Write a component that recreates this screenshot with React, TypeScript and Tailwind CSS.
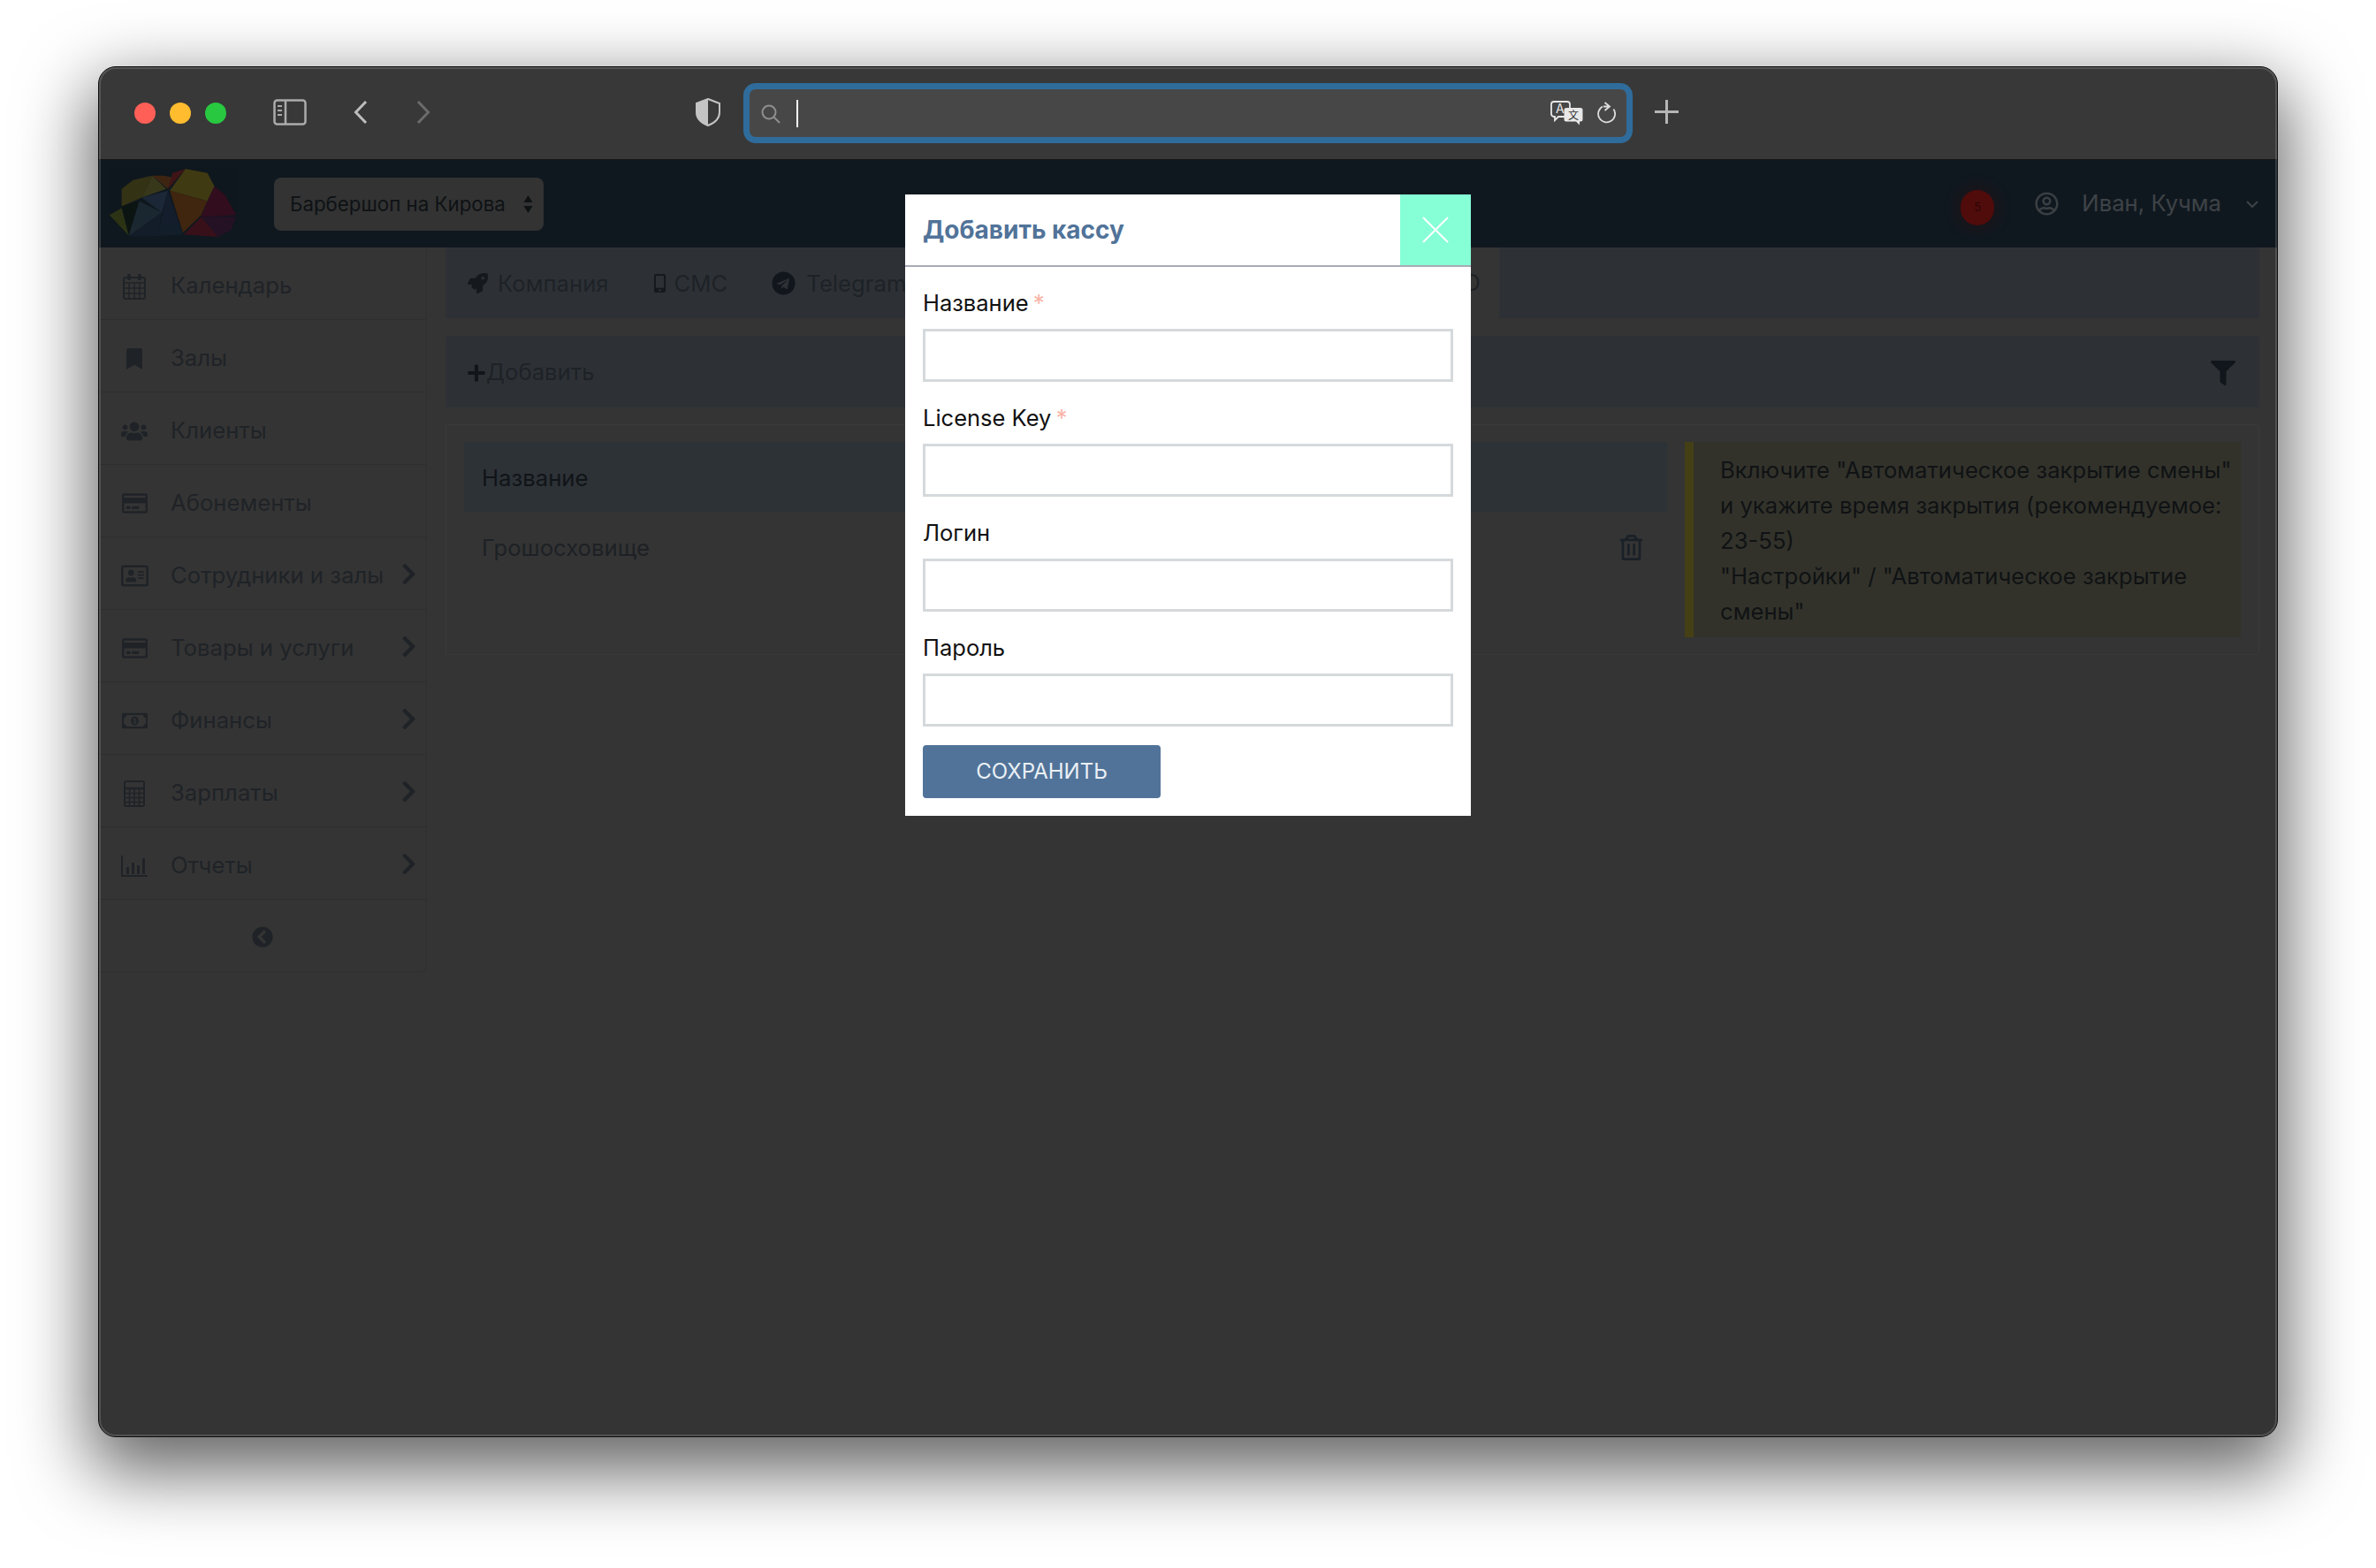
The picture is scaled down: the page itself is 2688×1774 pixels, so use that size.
import React from 'react';
import {
  FaBookmark,
  FaChevronCircleLeft,
  FaChevronRight,
  FaFilter,
  FaMobileAlt,
  FaPlus,
  FaRegAddressCard,
  FaRegCreditCard,
  FaRegMoneyBillAlt,
  FaRegTrashAlt,
  FaRegUserCircle,
  FaRocket,
  FaTelegram,
  FaUsers,
} from 'react-icons/fa';

const CalendarIcon = () => (
  <svg width="26" height="30" viewBox="0 0 26 30" fill="none" stroke="currentColor" strokeWidth="2">
    <rect x="1" y="5" width="24" height="24" rx="2" />
    <path d="M1 11h24M1 17h24M1 23h24M7 11v18M13 11v18M19 11v18" strokeWidth="1.500" />
    <path d="M7 1v7M19 1v7" strokeWidth="3.500" />
  </svg>
);

const CalculatorIcon = () => (
  <svg width="24" height="30" viewBox="0 0 24 30" fill="none" stroke="currentColor" strokeWidth="2">
    <rect x="1" y="1" width="22" height="28" rx="1.500" />
    <path d="M1 9h22" strokeWidth="2.500" />
    <path d="M1 14.500h22M1 19.500h22M1 24.500h22M6.500 9v20M12 9v20M17.500 9v20" strokeWidth="1.600" />
  </svg>
);

const ChartIcon = () => (
  <svg width="30" height="24" viewBox="0 0 30 24" fill="currentColor">
    <path d="M0 0h2v22h28v2H0z" />
    <path d="M6 13h3v8H6zM12 8h3v13h-3zM18 11h3v10h-3zM24 3h3v18h-3z" />
  </svg>
);

const icon = (Icon: React.ComponentType<{ size?: number }>, size: number) => <Icon size={size} />;

const NAV = [
  { label: 'Календарь', icon: <CalendarIcon /> },
  { label: 'Залы', icon: icon(FaBookmark, 24) },
  { label: 'Клиенты', icon: icon(FaUsers, 30) },
  { label: 'Абонементы', icon: icon(FaRegCreditCard, 29) },
  { label: 'Сотрудники и залы', icon: icon(FaRegAddressCard, 31), more: true },
  { label: 'Товары и услуги', icon: icon(FaRegCreditCard, 29), more: true },
  { label: 'Финансы', icon: icon(FaRegMoneyBillAlt, 29), more: true },
  { label: 'Зарплаты', icon: <CalculatorIcon />, more: true },
  { label: 'Отчеты', icon: <ChartIcon />, more: true },
];

const FIELDS = [
  { label: 'Название', required: true },
  { label: 'License Key', required: true },
  { label: 'Логин' },
  { label: 'Пароль' },
];

const LOGO: [string, string][] = [
  ['22,33 35,23 57,18 45,43 22,53', '#3e3a12'],
  ['57,18 73,33 45,43', '#42401a'],
  ['57,18 75,33 80,20 70,18', '#4a2a10'],
  ['75,33 95,10 80,15', '#4a1515'],
  ['95,10 120,15 128,30 120,47 77,35', '#4c4410'],
  ['77,35 120,47 113,63 92,83', '#4d2a0c'],
  ['128,30 140,40 153,63 113,65 120,47', '#3a0c1e'],
  ['113,65 153,65 147,80 132,88', '#2a1126'],
  ['113,65 132,88 93,85', '#420f1a'],
  ['75,35 92,85 63,87', '#14202f'],
  ['45,43 75,35 68,60', '#1e2c3d'],
  ['42,47 68,60 30,87', '#1e2c35'],
  ['22,53 42,47 30,85', '#0c1410'],
  ['8,63 22,55 30,86', '#333b12'],
  ['30,87 68,60 63,87', '#141e2c'],
];

const Toolbar = () => (
  <div className="h-[105px] bg-[#383838] border-b border-[#151515] flex items-center pl-[40px] shrink-0">
    <div className="flex gap-[16px]">
      <div className="w-6 h-6 rounded-full bg-[#ff5f57]" />
      <div className="w-6 h-6 rounded-full bg-[#febc2e]" />
      <div className="w-6 h-6 rounded-full bg-[#28c840]" />
    </div>
    <svg className="ml-[53px] -mt-[2px]" width="38" height="30" viewBox="0 0 38 30" fill="none" stroke="#ababab">
      <rect x="1.500" y="1.500" width="35" height="27" rx="3" strokeWidth="2.500" />
      <path d="M14 2v26" strokeWidth="2.500" />
      <path d="M5 8h5M5 13h5M5 18h5" strokeWidth="2" />
    </svg>
    <svg className="ml-[53px] -mt-[2px]" width="16" height="28" viewBox="0 0 16 28" fill="none" stroke="#bdbdbd" strokeWidth="3">
      <path d="M14 2 2.500 14 14 26" />
    </svg>
    <svg className="ml-[55px] -mt-[2px]" width="16" height="28" viewBox="0 0 16 28" fill="none" stroke="#6b6b6b" strokeWidth="3">
      <path d="M2 2l11.500 12L2 26" />
    </svg>
    <svg className="ml-[300px] -mt-[2px]" width="28" height="32" viewBox="0 0 28 32">
      <path d="M14 1 27 6v10c0 7-5 12-13 15C6 28 1 23 1 16V6z" fill="#3a3a3a" stroke="#c4c4c4" strokeWidth="2" />
      <path d="M14 1 1 6v10c0 7 5 12 13 15z" fill="#c4c4c4" />
    </svg>
    <div className="ml-[26px] w-[1006px] h-[68px] rounded-[14px] border-[7px] border-[#2f6c9b] bg-[#474747] flex items-center pl-[13px] pr-[12px]">
      <svg className="mt-[2px]" width="22" height="22" viewBox="0 0 22 22" fill="none" stroke="#8f8f8f" strokeWidth="2">
        <circle cx="9" cy="9" r="7.500" />
        <path d="m14.500 14.500 6.500 6.500" />
      </svg>
      <div className="ml-[18px] w-[2px] h-[31px] bg-white" />
      <svg className="ml-auto" width="37" height="28" viewBox="0 0 37 28">
        <path d="M4 1h15a3 3 0 0 1 3 3v11a3 3 0 0 1-3 3H9l-4 4v-4H4a3 3 0 0 1-3-3V4a3 3 0 0 1 3-3z" fill="#474747" stroke="#e8e8e8" strokeWidth="1.800" />
        <text x="6" y="14" fontSize="14" fill="#e8e8e8" fontFamily="Inter, sans-serif">A</text>
        <path d="M18 8h16a2.500 2.500 0 0 1 2.500 2.500V21a2.500 2.500 0 0 1-2.500 2.500h-1v4l-4-4H18a2.500 2.500 0 0 1-2.500-2.500V10.500A2.500 2.500 0 0 1 18 8z" fill="#e8e8e8" />
        <text x="20" y="21" fontSize="12" fill="#333" fontFamily="'Noto Sans CJK SC', sans-serif">文</text>
      </svg>
      <svg className="ml-[15px]" width="22" height="26" viewBox="0 0 22 26" fill="none" stroke="#dcdcdc" strokeWidth="1.800">
        <path d="M7 5.500a9.500 9.500 0 1 0 12.500 3" />
        <path d="M8 5.500h6.500M9.500 1l5.500 4.500-5.500 4.500" />
      </svg>
    </div>
    <svg className="ml-[25px] -mt-[3px]" width="27" height="27" viewBox="0 0 27 27" stroke="#b5b5b5" strokeWidth="3">
      <path d="M13.500 0v27M0 13.500h27" />
    </svg>
  </div>
);

const Header = () => (
  <div className="h-[99px] bg-[#10181f] flex items-center pl-[3px] pr-[21px] shrink-0">
    <svg className="opacity-80" width="170" height="99" viewBox="0 0 170 100">
      {LOGO.map(([points, fill]) => (
        <polygon key={points} points={points} fill={fill} />
      ))}
    </svg>
    <div className="ml-[25px] w-[305px] h-[60px] rounded-[8px] bg-[#333333] flex items-center pl-[18px] pr-[12px] text-[22.300px] text-[#0e1215]">
      <span>Барбершоп на Кирова</span>
      <svg className="ml-auto" width="11" height="20" viewBox="0 0 11 20" fill="#0e1215">
        <path d="M5.500 0 10.500 8H.500zM5.500 20 .500 12h10z" />
      </svg>
    </div>
    <div className="ml-auto mt-[8px] mr-[46px] w-[38px] h-[40px] rounded-full bg-[#500b0b] shadow-[0_0_14px_8px_rgba(90,10,10,0.12)] flex items-center justify-center text-[13px] text-[#2c0606]">
      5
    </div>
    <FaRegUserCircle className="text-[#3a3f43]" size={27} />
    <span className="ml-[26px] text-[25.700px] text-[#3e4347]">Иван, Кучма</span>
    <svg className="ml-[28px]" width="14" height="8" viewBox="0 0 14 8" fill="none" stroke="#3e4347" strokeWidth="2">
      <path d="m1 1 6 6 6-6" />
    </svg>
  </div>
);

const Sidebar = () => (
  <div className="w-[371px] h-[820px] shrink-0 border-r border-b border-[#2f2f2f] rounded-br-[6px] flex flex-col">
    {NAV.map((item) => (
      <div key={item.label} className="h-[82px] shrink-0 pt-[6px] border-b border-[#2e2e2e] flex items-center text-[25.700px] text-[#1f2327]">
        <div className="w-[81px] pr-[1px] flex justify-center text-[#1f2327]">{item.icon}</div>
        <span className="whitespace-nowrap">{item.label}</span>
        {item.more && <FaChevronRight className="ml-auto mr-[6px] -mt-[4px] text-[#1f2327]" size={27} />}
      </div>
    ))}
    <div className="h-[82px] pt-[2px] flex items-center justify-center text-[#1f2327]">
      <FaChevronCircleLeft size={24} />
    </div>
  </div>
);

const Tab = ({ icon, label, iconClass, className = '' }: { icon: React.ReactNode; label: string; iconClass: string; className?: string }) => (
  <div className={`flex items-center pt-[2px] text-[25.700px] text-[#1e2226] whitespace-nowrap ${className}`}>
    <span className={iconClass}>{icon}</span>
    {label}
  </div>
);

const Main = () => (
  <div className="flex-1 min-w-0 pl-[21px] pr-[20px] flex flex-col">
    <div className="h-[80px] flex">
      <div className="flex-1 bg-[#2d3136] flex items-center pl-[25px] gap-[50px] overflow-hidden">
        <Tab icon={<FaRocket size={23} />} label="Компания" iconClass="w-[34px] text-[#15191e]" />
        <Tab icon={<FaMobileAlt size={21} />} label="СМС" iconClass="w-[27px] text-[#15191e]" className="-ml-[3px]" />
        <Tab icon={<FaTelegram size={27} />} label="Telegram" iconClass="w-[39px] text-[#11161c]" />
      </div>
      <div className="w-[196px] flex items-center justify-end pr-[21px] text-[25.700px] text-[#1e2226]">ЭДО</div>
      <div className="w-[860px] bg-[#2d3136]" />
    </div>
    <div className="mt-[20px] h-[81px] pt-[2px] rounded-[3px] bg-[#2d3136] flex items-center pl-[24px] pr-[27px] text-[25.700px] text-[#1e2226]">
      <FaPlus className="text-[#11161b]" size={22} />
      <span>Добавить</span>
      <FaFilter className="ml-auto text-[#10161b]" size={28} />
    </div>
    <div className="mt-[19px] h-[261px] border border-[#3a3a3a] rounded-[3px] pt-[19px] pl-[20px] pr-[20px] flex gap-[20px]">
      <div className="w-[1361px] shrink-0">
        <div className="h-[79px] pt-[4px] bg-[#2d3237] flex items-center pl-[20px] text-[25.700px] text-[#111417]">Название</div>
        <div className="h-[82px] flex items-center pl-[20px] pr-[26px] text-[25.700px] text-[#1d2125]">
          <span>Грошосховище</span>
          <FaRegTrashAlt className="ml-auto -mt-[2px] text-[#1a2027]" size={29} />
        </div>
      </div>
      <div className="flex-1 h-[221px] border-l-[10px] border-[#453f15] bg-[#32322b] pl-[30px] pt-[12px] text-[25.700px] leading-[40px] text-[#101214] whitespace-nowrap">
        Включите "Автоматическое закрытие смены"
        <br />и укажите время закрытия (рекомендуемое:
        <br />23-55)
        <br />"Настройки" / "Автоматическое закрытие
        <br />смены"
      </div>
    </div>
  </div>
);

const Modal = () => (
  <div className="absolute left-[912px] top-[144px] w-[640px] bg-white flex flex-col">
    <div className="h-[82px] border-b-2 border-[#a7abb5] flex items-start">
      <div className="h-[80px] flex-1 flex items-center pl-[20px] text-[28px] font-bold text-[#517399]">Добавить кассу</div>
      <div className="w-[80px] h-[80px] bg-[#86ffd6] flex items-center justify-center">
        <svg width="30" height="30" viewBox="0 0 30 30" stroke="#fff" strokeWidth="2">
          <path d="m1 1 28 28M29 1 1 29" />
        </svg>
      </div>
    </div>
    <div className="px-[20px] pt-[21px] pb-[20px] flex flex-col">
      {FIELDS.map((field) => (
        <div key={field.label} className="mb-[21px] last:mb-[20px]">
          <div className="h-[40px] mb-[9px] flex items-center text-[25.500px] text-[#111111]">
            {field.label}
            {field.required && <span className="ml-[5px] text-[26px] leading-none text-[#f9b5a8]">*</span>}
          </div>
          <div className="h-[60px] border-[3px] border-[#d5d9db] bg-white" />
        </div>
      ))}
      <div className="w-[269px] h-[60px] rounded-[4px] bg-[#517399] flex items-center justify-center text-[24px] text-[#eaf0f5]">
        СОХРАНИТЬ
      </div>
    </div>
  </div>
);

export default function App() {
  return (
    <div className="w-[2688px] h-[1774px] bg-white pl-[111px] pt-[75px] overflow-hidden font-['Inter',sans-serif]">
      <div className="relative w-[2466px] h-[1551px] rounded-[20px] border border-[#0c0c0c] bg-[#343434] shadow-[0_30px_80px_10px_rgba(0,0,0,0.6)]">
        <div className="h-full rounded-[19px] overflow-hidden flex flex-col">
          <Toolbar />
          <Header />
          <div className="flex flex-1 min-h-0">
            <Sidebar />
            <Main />
          </div>
        </div>
        <Modal />
        <div className="absolute inset-0 rounded-[19px] border-2 border-white/15 pointer-events-none" />
      </div>
    </div>
  );
}
